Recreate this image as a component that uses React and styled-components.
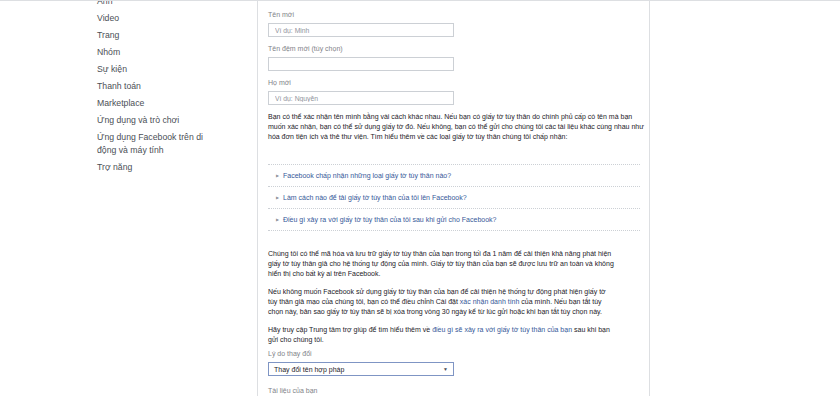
import React from "react";
import styled, { createGlobalStyle } from "styled-components";

const GlobalStyle = createGlobalStyle`
  html, body {
    margin: 0;
    padding: 0;
    background: #fff;
    font-family: "Liberation Sans", Arial, Helvetica, sans-serif;
  }
`;

const Page = styled.div`
  display: flex;
  height: 396px;
  overflow: hidden;
  border-top: 1px solid #dddfe2;
  box-sizing: border-box;
`;

const Sidebar = styled.nav`
  width: 257px;
  flex-shrink: 0;
  padding-left: 97px;
  box-sizing: border-box;
`;

const NavList = styled.ul`
  list-style: none;
  margin: -8px 0 0;
  padding: 0;
  width: 114px;
`;

const NavItem = styled.li`
  font-size: 8.7px;
  line-height: 13px;
  padding: 2px 0;
  color: #4b4f56;
`;

const Main = styled.main`
  width: 393px;
  flex-shrink: 0;
  box-sizing: border-box;
  border-left: 1px solid #dddfe2;
  border-right: 1px solid #dddfe2;
  padding: 8px 9px 0 10px;
`;

const Field = styled.div`
  display: flex;
  flex-direction: column;
  margin-bottom: ${(p) => p.$gap || 6}px;
`;

const Label = styled.label`
  font-size: 7px;
  line-height: 11px;
  color: #7f8389;
  margin-bottom: 3px;
`;

const TextInput = styled.input`
  width: 186px;
  height: 14px;
  box-sizing: border-box;
  border: 1px solid #ccd0d5;
  padding: 0 6px;
  font-family: inherit;
  font-size: 6.8px;
  color: #1d2129;
  outline: none;
  &::placeholder {
    color: #90949c;
  }
`;

const Para = styled.p`
  margin: 0 0 ${(p) => (p.$after ?? 8)}px;
  font-size: 7px;
  line-height: 10px;
  color: #1d2129;
`;

const Line = styled.span`
  display: block;
  white-space: nowrap;
`;

const Link = styled.span`
  color: #365899;
`;

const Accordion = styled.ul`
  list-style: none;
  margin: 22px 0 18px;
  padding: 0;
  border-bottom: 1px dotted #ccd0d5;
`;

const AccordionRow = styled.li`
  height: 21px;
  border-top: 1px dotted #ccd0d5;
  display: flex;
  align-items: center;
  padding-left: 8px;
  font-size: 7px;
  color: #365899;
`;

const Caret = styled.span`
  font-size: 4px;
  color: #90949c;
  margin-right: 4px;
`;

const SelectBox = styled.div`
  width: 186px;
  height: 14px;
  box-sizing: border-box;
  border: 1px solid #7f95c4;
  display: flex;
  align-items: center;
  justify-content: space-between;
  padding: 0 5px;
  font-size: 7px;
  color: #1d2129;
`;

const Arrow = styled.span`
  font-size: 5px;
  color: #4b4f56;
`;

const navItems = [
  "Ảnh",
  "Video",
  "Trang",
  "Nhóm",
  "Sự kiện",
  "Thanh toán",
  "Marketplace",
  "Ứng dụng và trò chơi",
  "Ứng dụng Facebook trên di động và máy tính",
  "Trợ năng",
];

const questions = [
  "Facebook chấp nhận những loại giấy tờ tùy thân nào?",
  "Làm cách nào để tải giấy tờ tùy thân của tôi lên Facebook?",
  "Điều gì xảy ra với giấy tờ tùy thân của tôi sau khi gửi cho Facebook?",
];

export default function App() {
  return (
    <>
      <GlobalStyle />
      <Page>
        <Sidebar>
          <NavList>
            {navItems.map((item) => (
              <NavItem key={item}>{item}</NavItem>
            ))}
          </NavList>
        </Sidebar>

        <Main>
          <Field>
            <Label>Tên mới</Label>
            <TextInput placeholder="Ví dụ: Minh" />
          </Field>
          <Field>
            <Label>Tên đệm mới (tùy chọn)</Label>
            <TextInput />
          </Field>
          <Field $gap={7}>
            <Label>Họ mới</Label>
            <TextInput placeholder="Ví dụ: Nguyễn" />
          </Field>

          <Para $after={0}>
            <Line>
              Bạn có thể xác nhận tên mình bằng vài cách khác nhau. Nếu bạn có
              giấy tờ tùy thân do chính phủ cấp có tên mà bạn
            </Line>
            <Line>
              muốn xác nhận, bạn có thể sử dụng giấy tờ đó. Nếu không, bạn có
              thể gửi cho chúng tôi các tài liệu khác cùng nhau như
            </Line>
            <Line>
              hóa đơn tiện ích và thẻ thư viện. Tìm hiểu thêm về các loại giấy
              tờ tùy thân chúng tôi chấp nhận:
            </Line>
          </Para>

          <Accordion>
            {questions.map((q) => (
              <AccordionRow key={q}>
                <Caret>▶</Caret>
                {q}
              </AccordionRow>
            ))}
          </Accordion>

          <Para>
            <Line>
              Chúng tôi có thể mã hóa và lưu trữ giấy tờ tùy thân của bạn trong
              tối đa 1 năm để cải thiện khả năng phát hiện
            </Line>
            <Line>
              giấy tờ tùy thân giả cho hệ thống tự động của mình. Giấy tờ tùy
              thân của bạn sẽ được lưu trữ an toàn và không
            </Line>
            <Line>hiển thị cho bất kỳ ai trên Facebook.</Line>
          </Para>
          <Para>
            <Line>
              Nếu không muốn Facebook sử dụng giấy tờ tùy thân của bạn để cải
              thiện hệ thống tự động phát hiện giấy tờ
            </Line>
            <Line>
              tùy thân giả mạo của chúng tôi, bạn có thể điều chỉnh Cài đặt{" "}
              <Link>xác nhận danh tính</Link> của mình. Nếu bạn tắt tùy
            </Line>
            <Line>
              chọn này, bản sao giấy tờ tùy thân sẽ bị xóa trong vòng 30 ngày
              kể từ lúc gửi hoặc khi bạn tắt tùy chọn này.
            </Line>
          </Para>
          <Para $after={3}>
            <Line>
              Hãy truy cập Trung tâm trợ giúp để tìm hiểu thêm về{" "}
              <Link>điều gì sẽ xảy ra với giấy tờ tùy thân của bạn</Link> sau
              khi bạn
            </Line>
            <Line>gửi cho chúng tôi.</Line>
          </Para>

          <Field $gap={3}>
            <Label>Lý do thay đổi</Label>
            <SelectBox>
              Thay đổi tên hợp pháp
              <Arrow>▼</Arrow>
            </SelectBox>
          </Field>
          <Label>Tài liệu của bạn</Label>
        </Main>
      </Page>
    </>
  );
}
